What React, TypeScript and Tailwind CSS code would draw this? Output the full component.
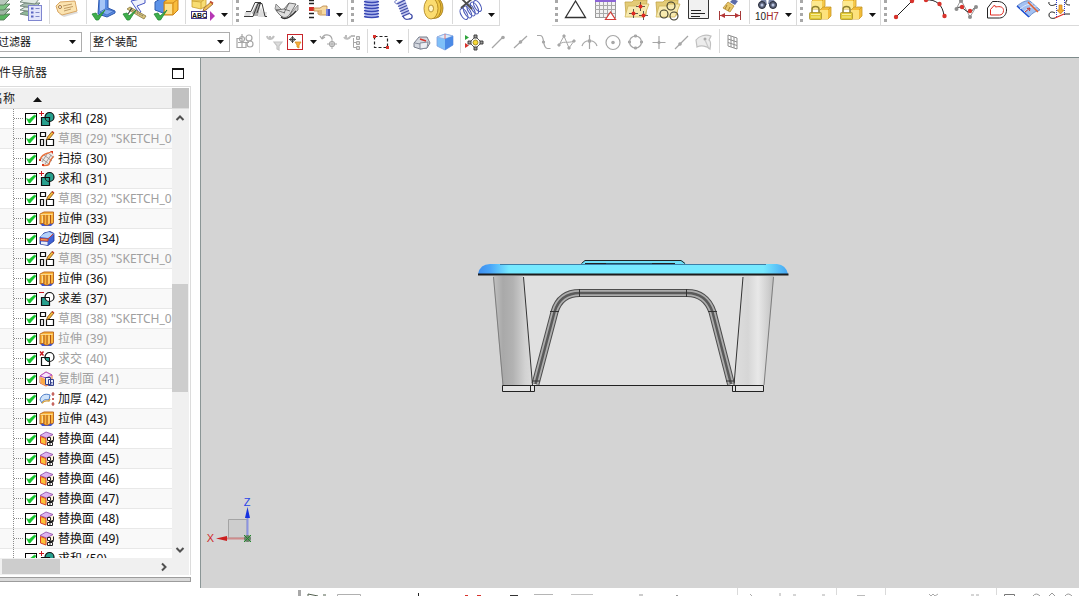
import type { ReactNode } from "react";

/* ---------- shared bits ---------- */

function Grip() {
  return (
    <span className="w-2 h-full flex justify-center shrink-0" aria-hidden>
      <span className="w-0 h-[22px] border-l-3 border-dotted border-[#a8a8a8]" />
    </span>
  );
}

function Sep() {
  return (
    <span className="w-1.5 h-full flex justify-center items-center shrink-0" aria-hidden>
      <span className="w-px h-full max-h-6 mb-0.5 bg-[#dadada]" />
    </span>
  );
}

function Caret() {
  return (
    <svg width="7" height="4" viewBox="0 0 7 4" aria-hidden>
      <path d="M0 0h7L3.500 4z" fill="#111" />
    </svg>
  );
}

function Tool({ label, children }: { label: string; children: ReactNode }) {
  return (
    <button type="button" aria-label={label} className="w-[31px] h-6 shrink-0">
      <svg width="31" height="24" viewBox="0 0 31 24" fill="none" aria-hidden>
        {children}
      </svg>
    </button>
  );
}

function MoreTools() {
  return (
    <button type="button" aria-label="更多" className="w-[11px] h-6 pt-1.5 shrink-0 grid place-items-center">
      <Caret />
    </button>
  );
}

function Group({ children }: { children: ReactNode }) {
  return (
    <div className="h-full flex shrink-0 pr-0.5 border-r border-b border-[#dadada]">{children}</div>
  );
}

function GreenCheck() {
  return <path d="M3 14l4-1 2 3 7-6-6.500 10H7z" fill="#3fae4c" stroke="#238a35" strokeWidth=".8" />;
}

/* ---------- main toolbar ---------- */

function Layers() {
  return (
    <g stroke="#6f8478" strokeWidth=".9">
      <path d="M5 14l5-3h15l-5 6z" fill="#8fb898" />
      <path d="M5 10l5-3h15l-5 5z" fill="#dfe8e1" />
      <path d="M5 6l5-3h15l-5 5z" fill="#a9bdb0" />
      <path d="M5 2l5-4h15l-5 6z" fill="#e2ebe4" />
    </g>
  );
}

function Folder() {
  return (
    <>
      <path d="M3 2h7l2-2h13l-1 15H4z" fill="#e3cb76" stroke="#c3a548" strokeWidth=".8" />
      <path d="M3 17l3-11h8l2-2h11l-5 13z" fill="#f7eab0" stroke="#d1b65a" strokeWidth=".8" />
    </>
  );
}

function LockedCubes() {
  return (
    <>
      <path d="M7 1l3-3h10v8l-3 3H7z" fill="#f6c94a" stroke="#c99a28" strokeWidth=".8" />
      <path d="M7 1h10v8H7z" fill="#fde98e" />
      <path d="M15 10l3-3h8v9l-3 3h-8z" fill="#f2bb38" stroke="#c99a28" strokeWidth=".8" />
      <path d="M15 10h8v9h-8z" fill="#fde27c" />
      <path d="M23 10l3-3M17 1l3-3" stroke="#c99a28" strokeWidth=".8" />
      <path d="M7 13V9.500c0-4 7-4 7 0V13" stroke="#8f8130" strokeWidth="1.500" />
      <rect x="4.500" y="12.500" width="12" height="7" rx="1" fill="#e2ca35" stroke="#a8912a" strokeWidth=".8" />
      <path d="M6 14.500h9M6 17h9" stroke="#f8ef9c" />
    </>
  );
}

function MainToolbar() {
  return (
    <div role="toolbar" aria-label="特征" className="h-[26px] flex shrink-0 overflow-hidden">
      <Group>
        <button type="button" aria-label="图层" className="w-[15px] h-6 shrink-0">
          <svg width="15" height="24" viewBox="16 0 15 24" fill="none" aria-hidden>
            <g stroke="#587a5c" strokeWidth=".9">
              <path d="M5 17l5-3h16l-6 6H5z" fill="#58b35f" />
              <path d="M5 12l5-3h16l-6 6H5z" fill="#9fb6a4" />
              <path d="M5 7l5-3h16l-6 6H5z" fill="#7cc381" />
              <path d="M5 2l5-3h16l-6 6H5z" fill="#b7c8bb" />
            </g>
          </svg>
        </button>
        <Tool label="图层设置">
          <Layers />
          <rect x="13.500" y="5.500" width="13" height="15" fill="#e4e6fb" stroke="#7f86d0" />
          <path d="M16 8.500h2.500M16 12.500h2.500M16 16.500h2.500" stroke="#5a65c2" strokeWidth="2" />
          <path d="M20.500 8.500h4M20.500 12.500h4M20.500 16.500h4" stroke="#8088c8" />
        </Tool>
        <Sep />
        <Tool label="属性">
          <path d="M7 14l17-4 2 3-14 4z" fill="#dcdcdc" />
          <path d="M4 6l4-4 15-1 2 10-15 4-4-3z" fill="#fbe3b0" stroke="#d9a765" />
          <circle cx="8" cy="7" r="1.500" fill="#fff" stroke="#a8783a" />
          <path d="M11 6l9-2M12 8.500l9-2M12 11l7-2" stroke="#b08850" strokeWidth=".8" />
        </Tool>
        <Sep />
        <Tool label="检查几何体">
          <path d="M10-1h9v9l7 3v2l-8 4-9-3z" fill="#5b8de4" stroke="#2c57ad" />
          <path d="M11 0h5v9l-5 3z" fill="#a5c5f7" />
          <path d="M16 9l9 2-7 4-7-3z" fill="#84adf0" stroke="#2c57ad" strokeWidth=".6" />
          <GreenCheck />
        </Tool>
        <Tool label="检查尺寸">
          <path d="M11 1l14-3v5l-8 3 4 6-2 1z" fill="#eef0fa" stroke="#4756c4" />
          <path d="M7 9l3-2 16 9-2 3z" fill="#d8c37a" stroke="#8c7b43" strokeWidth=".8" />
          <path d="M10 9l13 7" stroke="#555" strokeDasharray="1 1" />
          <path d="M12 8L8 14" stroke="#444" strokeWidth="1.200" />
          <GreenCheck />
        </Tool>
        <Tool label="检查装配">
          <path d="M4 2l5-3h8v10l-5 4-8-3z" fill="#5c92e8" stroke="#2f5cae" />
          <path d="M13 2l4-3h10v11l-5 5h-9z" fill="#f9bd3c" stroke="#c77f16" />
          <path d="M13 3h9v12M22 3l5-4" stroke="#d18b1c" />
          <path d="M14 4h7v10h-7z" fill="#fde08a" />
          <GreenCheck />
        </Tool>
        <Sep />
        <Tool label="注释">
          <path d="M4 0h11l3-2v8l-5 3-9-2z" fill="#f8dd72" stroke="#c69d2e" strokeWidth=".8" />
          <path d="M13 2v7M4 1l9 1 4-3" stroke="#c69d2e" strokeWidth=".8" />
          <path d="M23 2l2 2-7 6-3 1 1-3z" fill="#f3c35a" stroke="#8f5a2a" strokeWidth=".8" />
          <path d="M22 1.500l3 2" stroke="#c04d33" strokeWidth="2" />
          <rect x="3.500" y="11.500" width="15" height="7" fill="#fff" stroke="#453a8c" />
          <text x="4" y="18" fontSize="7" fontWeight="700" fontFamily="Liberation Sans, sans-serif" fill="#111">
            ABC
          </text>
          <path d="M22 11v10l5-5z" fill="#b637b4" />
        </Tool>
        <MoreTools />
      </Group>
      <Group>
        <Grip />
        <Tool label="筋板">
          <path d="M4 12h7l-3 5H3zM20 7l2 5h4l-1 5h-8z" fill="#dcdcdc" />
          <path d="M11 13l5-10h4l-3 13h-4z" fill="#a9a9a9" />
          <path d="M3 16.500h9l5-13h4l3 13h2M5 11.500h5l4-9h6M16 13l3-9" stroke="#3a3a3a" />
        </Tool>
        <Tool label="折弯">
          <path d="M4 4l8 8-2 5-7-8zM18 17l8-7v-5l-7 8z" fill="#cfcfcf" stroke="#777" strokeWidth=".8" />
          <path d="M4 10l8-1 5-6 7 1-6 10c-4 6-9 4-14-4z" fill="#dedede" stroke="#555" strokeWidth=".8" />
          <path d="M12 9l6 2M13 13c-4-1-5-2-9-3M17 3l-5 10" stroke="#555" strokeWidth=".8" />
          <path d="M9 17c3 3 8 2 15-6" stroke="#333" strokeWidth="1.200" />
        </Tool>
        <Tool label="选择截面">
          <path d="M6 0.500h5M6 3.500h5M6 13.500h5M6 17.500h5" stroke="#222" strokeWidth="1.500" />
          <path d="M6 7h5v4H6z" fill="#d33128" />
          <path d="M11 8h6l3-2h4v9h-7l-2-1v-3h-4z" fill="#f7d9a0" stroke="#b98443" strokeWidth=".8" />
          <path d="M15 11h4M16 13h3" stroke="#b98443" strokeWidth=".8" />
          <path d="M23 9h4v7h-4z" fill="#7a85dc" />
          <path d="M25 9h2v7h-2z" fill="#4350b8" />
        </Tool>
        <MoreTools />
      </Group>
      <Group>
        <Grip />
        <Tool label="压缩弹簧">
          <path d="M9-1h13v19H9z" fill="#b6bff0" />
          <path d="M8 1.500q8 2 15 0M8 4.500q8 2 15 0M8 7.500q8 2 15 0M8 10.500q8 2 15 0M8 13.500q8 2 15 0M8 16.500q8 2 15 0" stroke="#3a48b4" strokeWidth="1.500" />
        </Tool>
        <Tool label="拉伸弹簧">
          <path d="M10 2l8-3 5 15-7 3z" fill="#c3c8ef" />
          <path d="M10 4l8-4M11 6.500l8-3.500M12 9l8-3.500M13 11.500l8-3.500M14 14l8-3.500M15 16.500l8-3.500" stroke="#414da8" strokeWidth="1.300" />
          <path d="M16 16c1 3 3 4 6 3 4 0 4-4 1-5" stroke="#414da8" strokeWidth="1.300" />
          <path d="M10 4c-3-1-3-3 0-4" stroke="#6570c0" />
        </Tool>
        <Tool label="蝶形弹簧">
          <ellipse cx="18" cy="8" rx="7" ry="10" fill="#e9bb35" stroke="#9c7416" strokeWidth=".8" />
          <ellipse cx="16" cy="8" rx="7" ry="10.500" fill="#f1c948" stroke="#9c7416" strokeWidth=".8" />
          <ellipse cx="13" cy="8.500" rx="7" ry="10.500" fill="#fbdc70" stroke="#a87d18" strokeWidth=".8" />
          <ellipse cx="13" cy="8.500" rx="2.500" ry="3.500" fill="#fff6c8" stroke="#a87d18" strokeWidth=".8" />
        </Tool>
        <Sep />
        <Tool label="删除弹簧">
          <g stroke="#4a59b8" strokeWidth="1.100">
            <ellipse cx="9" cy="14" rx="3" ry="6" transform="rotate(-30 9 14)" />
            <ellipse cx="12.500" cy="12" rx="3" ry="6.500" transform="rotate(-30 12.500 12)" />
            <ellipse cx="16" cy="10" rx="3" ry="6.500" transform="rotate(-30 16 10)" />
            <ellipse cx="19.500" cy="8" rx="3" ry="6.500" transform="rotate(-30 19.500 8)" />
            <ellipse cx="22.500" cy="6" rx="3" ry="6" transform="rotate(-30 22.500 6)" />
          </g>
          <path d="M6-2l11 11M18-2L6 8" stroke="#4b4b4b" strokeWidth="1.800" />
        </Tool>
        <MoreTools />
      </Group>
      <div className="h-full flex grow ml-[52px] min-w-0">
        <Group>
          <Grip />
          <Tool label="基准">
            <path d="M15.500 1L5.500 17.500h20z" stroke="#333" strokeWidth="1.300" />
          </Tool>
          <Tool label="表格">
            <rect x="4.500" y="1.500" width="20" height="16" fill="#f2f2f2" stroke="#9a9a9a" />
            <path d="M4 5.500h20M4 9.500h20M4 13.500h20M8.500 2v15M12.500 2v15M16.500 2v15M20.500 2v15" stroke="#a8a8a8" />
            <path d="M4 0h21v2H4z" fill="#8b64d6" />
            <path d="M19.500 12l-5 7.500h10z" fill="#fff" stroke="#d23c36" strokeWidth="1.200" />
          </Tool>
          <Tool label="点集">
            <Folder />
            <path d="M18.500 2v9M14 6.500h9M11.500 9v9M7 13.500h9M21.500 11v9M17 15.500h9" stroke="#333" strokeWidth=".8" />
            <g fill="#e02c22">
              <circle cx="18.500" cy="6.500" r="2" />
              <circle cx="11.500" cy="13.500" r="2" />
              <circle cx="21.500" cy="15.500" r="2" />
            </g>
          </Tool>
          <Tool label="孔集">
            <Folder />
            <g stroke="#3b3b2a" strokeWidth="1.100">
              <circle cx="18" cy="6" r="4" />
              <circle cx="11" cy="14" r="4" />
              <circle cx="21" cy="16" r="4" />
            </g>
          </Tool>
          <Tool label="技术要求">
            <path d="M4.500-1v19.500h20V-1" fill="#f1f1f1" stroke="#333" />
            <path d="M7 10.500h10M7 13.500h14M7 16.500h9" stroke="#222" />
          </Tool>
          <Tool label="格式刷">
            <path d="M18-1l5 2-3 4-5-3z" fill="#5b6ba8" />
            <path d="M13 2l6 4-4 6-7-4z" fill="#e9c86b" stroke="#b48d37" strokeWidth=".8" />
            <path d="M12 5l-2 4M15 7l-2 4" stroke="#a67f2c" />
            <path d="M4.500 11v9M25.500 11v9M5 15.500h20" stroke="#a63a3a" />
            <path d="M5 15.500l5-2.500v5zM25 15.500l-5-2.500v5z" fill="#b53636" />
          </Tool>
          <Sep />
          <Tool label="公差查询">
            <path d="M6 5l4-6h4l1 6zM16 4l1-5h4l4 5z" fill="#7b86a6" />
            <circle cx="10" cy="5" r="3.500" fill="#5a6178" stroke="#272c3a" />
            <circle cx="21" cy="5" r="3.500" fill="#5a6178" stroke="#272c3a" />
            <circle cx="10" cy="5" r="1.500" fill="#b9c4e0" />
            <circle cx="21" cy="5" r="1.500" fill="#b9c4e0" />
            <text x="3" y="20" fontSize="10" fontFamily="Liberation Sans, sans-serif" fill="#222">
              10<tspan fill="#a32626">H7</tspan>
            </text>
          </Tool>
          <MoreTools />
        </Group>
        <Group>
          <Grip />
          <Tool label="锁定部件">
            <LockedCubes />
          </Tool>
          <Tool label="锁定装配">
            <LockedCubes />
          </Tool>
          <MoreTools />
        </Group>
        <div className="h-full flex grow border-b border-[#dadada]">
          <Grip />
          <Tool label="直线">
            <path d="M7 17L23 1" stroke="#222" />
            <circle cx="7" cy="17" r="2.200" fill="#d8332c" />
            <circle cx="23" cy="1" r="2.200" fill="#d8332c" />
          </Tool>
          <Tool label="圆弧">
            <path d="M6 0c10-1 17 5 18 16" stroke="#222" />
            <circle cx="6" cy="0" r="2.200" fill="#d8332c" />
            <circle cx="19.500" cy="4" r="2.200" fill="#d8332c" />
            <circle cx="24.500" cy="16" r="2.200" fill="#d8332c" />
          </Tool>
          <Tool label="艺术样条">
            <path d="M5 9l5-9 9 17 6-10" stroke="#9a9a9a" />
            <path d="M5 9c6-6 9 4 14 3 3-1 3-4 6-5" stroke="#333" />
            <g fill="#8d8d8d">
              <circle cx="5.500" cy="9" r="2" />
              <circle cx="19" cy="17" r="2" />
              <circle cx="25" cy="7" r="2" />
              <circle cx="10" cy="1" r="2" />
            </g>
            <circle cx="11" cy="7" r="2.200" fill="#d8332c" />
            <circle cx="19" cy="11" r="2.200" fill="#d8332c" />
          </Tool>
          <Tool label="偏置曲线">
            <path d="M5.500 18V8l5-6.500h5c6 0 9 4 9 8.500s-3 8-7 8z" stroke="#222" />
            <path d="M8.500 15V9.500l4-4.500 1 2c5-1 8 0 8 3.500 0 3-2 4.500-4 4.500z" stroke="#e02c22" />
          </Tool>
          <Tool label="面上偏置">
            <path d="M4 6C9 2 13 0 17 1l10 9c-4 1-8 3-11 7z" fill="#a3c1f2" stroke="#5a7fc0" strokeWidth=".8" />
            <path d="M4 6l12 11" stroke="#1e4fd0" strokeWidth="1.500" />
            <path d="M7 9c5-4 8-5 13-5M11 12c4-4 8-6 13-6" stroke="#dbe8fb" />
            <path d="M15 2l10 10" stroke="#e6602a" strokeWidth="1.500" />
            <path d="M12 12l5-4M17 8l-3 .5M17 8l-.5 3" stroke="#c5332b" />
          </Tool>
          <Tool label="截面曲线">
            <path d="M12.500-2v20M20.500-2v17" stroke="#3040d0" strokeDasharray="1 1" />
            <path d="M12 4c-4 3-8 1-7-2M26 5c-5 0-5-2-3-5M11 13c-3-2-6-1-6 2s3 4 6 3M20 14h6" stroke="#222" />
            <path d="M11 18l9-4" stroke="#e02c22" strokeWidth="1.300" />
            <path d="M15 5h3v5h2l-3.500 4-3.500-4h2z" fill="#f6ad32" stroke="#c57a17" strokeWidth=".7" />
          </Tool>
        </div>
      </div>
    </div>
  );
}

/* ---------- selection bar ---------- */

function Snap({ label, children }: { label: string; children: ReactNode }) {
  return (
    <button type="button" aria-label={label} className="w-[23px] h-[22px] shrink-0">
      <svg width="23" height="22" viewBox="0 0 23 22" fill="none" stroke="#a6a6a6" strokeWidth="1.200" aria-hidden>
        {children}
      </svg>
    </button>
  );
}

function MoreSnap({ wide = false }: { wide?: boolean }) {
  return (
    <button type="button" aria-label="更多" className={`${wide ? "w-3" : "w-2.5"} h-[22px] shrink-0 grid place-items-center`}>
      <Caret />
    </button>
  );
}

function DropDown({ label, value, className }: { label: string; value: string; className: string }) {
  return (
    <div className={`relative h-5 shrink-0 ${className}`}>
      <select
        aria-label={label}
        className="block w-full h-full appearance-none border border-[#adadad] bg-white pl-0.5 pr-4 text-[11px] leading-4 text-[#111]"
      >
        <option>{value}</option>
      </select>
      <span className="absolute right-1.5 top-2 pointer-events-none">
        <Caret />
      </span>
    </div>
  );
}

function SelectionBar() {
  return (
    <div role="toolbar" aria-label="选择条" className="h-8 flex items-center shrink-0 overflow-hidden border-b border-[#7d8b8b]">
      <DropDown label="类型过滤器" value="过滤器" className="w-[87px] -ml-[5px]" />
      <DropDown label="选择范围" value="整个装配" className="w-[140px] ml-2 mr-[3px]" />
      <Snap label="相交">
        <path d="M4 7.500h5v9H4zM9 3v10M5 11.500h11M9 16.500h4v-5" />
        <circle cx="9" cy="8" r="2.500" />
        <circle cx="16" cy="7" r="3" />
        <circle cx="17" cy="13" r="3" />
      </Snap>
      <Sep />
      <Snap label="重置过滤器">
        <path d="M5 5c1 4 5 4 7 0M8 5v3" stroke="#c0c0c0" strokeWidth="2" />
        <path d="M12 11h8l-3 4v4l-2-1v-3z" fill="#dcdcdc" stroke="#c4c4c4" />
      </Snap>
      <Snap label="细节过滤器">
        <rect x="2.500" y="3.500" width="15" height="15" stroke="#c8252b" strokeWidth="1" />
        <circle cx="7.500" cy="8.500" r="2" stroke="#444" strokeWidth="1" />
        <path d="M7.500 5v7M4 8.500h7" stroke="#444" strokeWidth="1" />
        <path d="M10 11h6l-2 3v3l-2-1v-2z" fill="#f7b13c" stroke="#d88a1e" strokeWidth=".8" />
      </Snap>
      <MoreSnap />
      <Snap label="移动手柄">
        <path d="M4 8c1-6 9-5 10 0M4 8L2 5M4 8l3-2" />
        <circle cx="14" cy="13" r="2.500" />
        <path d="M14 8v10M9 13h10" strokeWidth="1" />
      </Snap>
      <Snap label="选择组">
        <path d="M3 6c2 3 5 2 7-1M5 4v4M10 5h4" stroke="#bdbdbd" strokeWidth="2" />
        <path d="M12.500 7v9.500M12.500 11.500h3M12.500 16.500h3" strokeWidth="1" />
        <path d="M15.500 5.500h3v3h-3zM15.500 10.500h3v3h-3zM15.500 15.500h3v3h-3z" fill="#ddd" strokeWidth="1" />
      </Snap>
      <Sep />
      <Snap label="矩形选择">
        <path d="M4.500 5.500h13v11h-13z" stroke="#222" strokeDasharray="3 2" />
        <path d="M3 4h3v3H3zM16 15h3v3h-3z" fill="#d8332c" stroke="none" />
      </Snap>
      <MoreSnap wide />
      <Sep />
      <Snap label="着色显示">
        <path d="M3 12l5-6 8 0 3 6-3 5-7 1-6-2z" fill="#d3d7df" stroke="#6a7080" strokeWidth=".9" />
        <path d="M9 12l8-1-1 6-7 1zM4 12l5 1" fill="#eceef3" stroke="#7d8494" strokeWidth=".9" />
        <path d="M9 8l6 2" stroke="#d8332c" strokeWidth="1.500" />
      </Snap>
      <Snap label="透明显示">
        <path d="M3 6l8-3 8 2v9l-8 5-8-4z" fill="#7fc0f8" stroke="#7fa0e0" strokeWidth=".8" />
        <path d="M3 6l8 2 8-3-8-2z" fill="#dcebfc" stroke="#8fb0e4" strokeWidth=".8" />
        <path d="M11 8v11l8-5V5z" fill="#4b8ae6" stroke="none" />
        <path d="M11 3v5" stroke="#e05555" strokeWidth=".8" />
      </Snap>
      <Sep />
      <Snap label="启用捕捉点">
        <path d="M2 4v5l4-2.500z" fill="#2fa43c" stroke="none" />
        <path d="M2 12v5l4-2.500z" fill="#d8332c" stroke="none" />
        <path d="M12.500 5.500l6 6-6 6-6-6z" stroke="#444" strokeWidth=".9" />
        <path d="M11 4h3v3h-3zM11 16h3v3h-3zM5 10h3v3H5zM17 10h3v3h-3z" fill="#999" stroke="#333" strokeWidth=".9" />
        <circle cx="12.500" cy="11.500" r="2.500" fill="#f8d833" stroke="#8c7a18" strokeWidth=".8" />
      </Snap>
      <Snap label="端点">
        <path d="M6 17L17 6" />
        <circle cx="17" cy="6.500" r="1.200" fill="#aaa" />
      </Snap>
      <Snap label="中点">
        <path d="M5 17L18 5" />
        <circle cx="11.500" cy="11" r="1.200" fill="#aaa" />
      </Snap>
      <Snap label="控制点">
        <path d="M5 4.500h3c3 0 3 3 3.500 6s1 7 4 7h3" />
        <circle cx="11.500" cy="11" r="1" fill="#aaa" />
      </Snap>
      <Snap label="极点">
        <path d="M4 14L9 5l5 12 5-7" strokeWidth="1" />
        <path d="M4 14c4-5 8-1 15-4" strokeWidth="1" />
        <path d="M3 13h2v2H3zM8 4h2v2H8zM13 16h2v2h-2zM18 9h2v2h-2z" fill="#aaa" strokeWidth="1" />
      </Snap>
      <Snap label="交点">
        <path d="M4 15c2-7 13-7 15 0M11.500 4v14" />
        <path d="M10.500 9h2v2h-2z" fill="#aaa" />
      </Snap>
      <Snap label="圆弧中心">
        <circle cx="12" cy="11.500" r="7" />
        <circle cx="12" cy="11.500" r="1.200" fill="#aaa" />
      </Snap>
      <Snap label="象限点">
        <circle cx="11.500" cy="11" r="6" />
        <path d="M10.500 4h2v2h-2zM10.500 16h2v2h-2zM4.500 10h2v2h-2zM16.500 10h2v2h-2z" fill="#aaa" strokeWidth="1" />
      </Snap>
      <Snap label="现有点">
        <path d="M12 5v13M5.500 11.500h13" />
        <circle cx="12" cy="11.500" r="1" fill="#aaa" />
      </Snap>
      <Snap label="曲线上的点">
        <path d="M5 18L18 5" />
        <circle cx="10" cy="13" r="1.200" fill="#aaa" />
      </Snap>
      <Snap label="面上的点">
        <path d="M3 9c3-4 9-6 15-4l-2 4c2 1 2 4 1 9-3-3-9-4-13-2z" fill="#ececec" stroke="#c0c0c0" />
        <circle cx="12" cy="8" r="1.500" fill="#aaa" stroke="none" />
        <path d="M12 9l4 9" stroke="#c9c9c9" />
      </Snap>
      <Sep />
      <Snap label="有界栅格">
        <path d="M6 4l9 3v11l-9-3zM9 5v11M12 6v11M6 8l9 3M6 11.500l9 3" stroke="#909090" strokeWidth="1" />
      </Snap>
    </div>
  );
}

/* ---------- part navigator ---------- */

type Kind = "unite" | "subtract" | "intersect" | "sketch" | "sweep" | "extrude" | "blend" | "copyFace" | "thicken" | "replaceFace";

type Feature = { kind: Kind; name: string; id: number; note?: string; dim?: boolean };

const SKETCH_NOTE = '"SKETCH_0';

const FEATURES: Feature[] = [
  { kind: "unite", name: "求和", id: 28 },
  { kind: "sketch", name: "草图", id: 29, note: SKETCH_NOTE, dim: true },
  { kind: "sweep", name: "扫掠", id: 30 },
  { kind: "unite", name: "求和", id: 31 },
  { kind: "sketch", name: "草图", id: 32, note: SKETCH_NOTE, dim: true },
  { kind: "extrude", name: "拉伸", id: 33 },
  { kind: "blend", name: "边倒圆", id: 34 },
  { kind: "sketch", name: "草图", id: 35, note: SKETCH_NOTE, dim: true },
  { kind: "extrude", name: "拉伸", id: 36 },
  { kind: "subtract", name: "求差", id: 37 },
  { kind: "sketch", name: "草图", id: 38, note: SKETCH_NOTE, dim: true },
  { kind: "extrude", name: "拉伸", id: 39, dim: true },
  { kind: "intersect", name: "求交", id: 40, dim: true },
  { kind: "copyFace", name: "复制面", id: 41, dim: true },
  { kind: "thicken", name: "加厚", id: 42 },
  { kind: "extrude", name: "拉伸", id: 43 },
  { kind: "replaceFace", name: "替换面", id: 44 },
  { kind: "replaceFace", name: "替换面", id: 45 },
  { kind: "replaceFace", name: "替换面", id: 46 },
  { kind: "replaceFace", name: "替换面", id: 47 },
  { kind: "replaceFace", name: "替换面", id: 48 },
  { kind: "replaceFace", name: "替换面", id: 49 },
  { kind: "unite", name: "求和", id: 50 },
];

const GLYPHS: Record<Kind, ReactNode> = {
  unite: (
    <>
      <path d="M0 2.500h5M2.500 0v5" stroke="#c8181e" />
      <circle cx="10.500" cy="6" r="4.500" fill="#27a08e" stroke="#111" strokeWidth="1.200" />
      <path d="M2.500 6.500h8v8h-8z" fill="#27a08e" stroke="#111" strokeWidth="1.200" />
      <path d="M10.500 10.500A4.500 4.500 0 0 1 6 6.500" stroke="#111" />
    </>
  ),
  subtract: (
    <>
      <path d="M0 1.500h5" stroke="#c8181e" />
      <path d="M2.500 6.500h8v8h-8z" fill="#27a08e" stroke="#111" strokeWidth="1.200" />
      <circle cx="10.500" cy="6" r="4.500" fill="#fff" stroke="#111" strokeWidth="1.200" />
      <path d="M6 6.500h4.500V11" stroke="#111" />
    </>
  ),
  intersect: (
    <>
      <path d="M1 .5l3.500 4M4.500 .5L1 4.500" stroke="#c8181e" strokeWidth="1.400" />
      <path d="M2.500 6.500h8v8h-8z" fill="#fff" stroke="#111" strokeWidth="1.200" />
      <circle cx="10.500" cy="6" r="4.500" fill="#fff" stroke="#111" strokeWidth="1.200" />
      <path d="M6 6.500h4.500v4C8 10.500 6 9 6 6.500z" fill="#27a08e" stroke="#111" />
    </>
  ),
  sketch: (
    <>
      <path d="M1.500 1.500h5v4h-5zM1.500 8.500h3v6h-3zM7.500 8.500h7v6h-7z" fill="#fff" stroke="#111" strokeWidth="1.200" />
      <path d="M7.500 9l1-3L13 .5l2 1.500-4.500 5.500z" fill="#f4b83c" stroke="#7a4b13" strokeWidth=".8" />
      <path d="M13 .5l2 1.500" stroke="#c0392b" strokeWidth="1.300" />
    </>
  ),
  sweep: (
    <>
      <path d="M1 8L7 3l7-1.500 1 4-5 8.500-6 0z" fill="#eeeae7" />
      <path d="M3 11l5-8M6 13l6-9M9 14l5-8M2 7l8 6M5 4l8 6M9 2l5 4" stroke="#9a9391" strokeWidth=".9" />
      <path d="M1 9c1-4 4-6 8-7l3-1M4 14.500c3 0 5 0 6-1 1-4 3-7 5-8" stroke="#e9703a" strokeWidth="1.300" />
      <path d="M11 0h3v3M0 8h2v2H0zM3 13h2v2H3z" fill="#d8391c" />
    </>
  ),
  extrude: (
    <>
      <path d="M1 12l2 3h9l3-3-2-2z" fill="#3f57cc" />
      <path d="M1 3l4-2h9.500v10.500L13 13l-2-1-1.500 2H6l-1.500-2L1 13z" fill="#fbb53a" stroke="#b5601a" strokeWidth=".9" />
      <path d="M5 3v9M8 3v10M11.500 3v9" stroke="#a8541a" />
      <path d="M1.500 3.500h12M3.500 5v7M10 5v8" stroke="#fde09a" strokeWidth=".9" />
    </>
  ),
  blend: (
    <>
      <path d="M1 6l4-4 6-1.500 4 2V10l-6 4.500-8-1.500z" fill="#3f62d6" stroke="#1e3592" strokeWidth=".8" />
      <path d="M1 6c2-3 5-4 9-5l5 2-6 4z" fill="#b5d2f9" />
      <path d="M1.500 7.500L9 8v2l-7.500-.5z" fill="#f8a55b" stroke="#d0381e" strokeWidth=".8" />
      <path d="M2 10.500l6.500.5V14L2 13z" fill="#e9edf8" />
      <path d="M9 8l5-5" stroke="#d8402a" />
    </>
  ),
  copyFace: (
    <>
      <path d="M1 5l6-4 6 3v8l-6 3-6-3z" fill="#fbe6cc" stroke="#e0642a" strokeWidth=".9" />
      <path d="M1 5l6-4 6 3-6 3z" fill="#f8e6fb" stroke="#b34cc8" />
      <path d="M2 6l4 2v6l-4-2z" fill="#fba944" />
      <path d="M6.500 6.500h5v7h-5zM9.500 8.500h5v6h-5z" fill="#eef1fb" stroke="#323f8c" />
      <path d="M11 11.500h2.500M11 13h2.500" stroke="#323f8c" strokeWidth=".8" />
    </>
  ),
  thicken: (
    <>
      <path d="M1 9c1-5 5-7 10-5l-1 5c-4-1-6 0-7 3z" fill="#cfe3fa" stroke="#3d6fc0" strokeWidth=".9" />
      <path d="M3 12.500c1-2 4-3 7-2.500l1-2" stroke="#d6a03e" strokeWidth="1.300" />
      <path d="M14 1v4M14 7v2M14 11v4M12.500 3h3M12.500 13h3M13 8h2" stroke="#b3322b" />
    </>
  ),
  replaceFace: (
    <>
      <path d="M1 4.500l6-3.500 7 2.500v8L7 15l-6-3z" fill="#fff3d8" />
      <path d="M1 4.500l6-3.500 7 2.500L7.500 7z" fill="#dcb4f0" stroke="#8c46a8" strokeWidth=".8" />
      <path d="M1.500 5.500L7 7.500V14l-5.500-2z" fill="#fcc236" stroke="#d8402a" />
      <path d="M8.500 6.500h3v3h-3zM8.500 11.500h5v3h-5z" fill="#fff" stroke="#222" />
      <path d="M14.500 5.500v4h-2M10 10.500h4.500M10 13h2" stroke="#222" />
    </>
  ),
};

function FeatureRow({ feature }: { feature: Feature }) {
  const { kind, name, id, note, dim } = feature;
  return (
    <li className="h-5 flex items-center border-b border-[#e8e8e8] odd:bg-white even:bg-[#f9f9f9]">
      <span className="w-[13px] shrink-0" />
      <span className="w-3 h-full shrink-0 flex items-center border-l border-dotted border-[#8c8c8c]" aria-hidden>
        <span className="w-[9px] border-t border-dotted border-[#8c8c8c]" />
      </span>
      <label className="flex items-center whitespace-nowrap">
        <span className="relative w-3 h-3 shrink-0">
          <input
            type="checkbox"
            defaultChecked
            className="peer block w-3 h-3 appearance-none border border-black bg-white"
          />
          <svg
            className="absolute inset-0 hidden peer-checked:block pointer-events-none"
            width="12"
            height="12"
            viewBox="0 0 12 12"
            aria-hidden
          >
            <path d="M1.500 5.500L4 6.500 9.500 2 11 3 5 10H4z" fill="#12c62c" stroke="#12c62c" strokeWidth=".6" />
          </svg>
        </span>
        <svg className="ml-0.5 mr-[3px] shrink-0" width="16" height="16" viewBox="0 0 16 16" fill="none" aria-hidden>
          {GLYPHS[kind]}
        </svg>
        <span className={`flex gap-1 text-xs leading-4 ${dim ? "text-[#a0a0a0]" : "text-[#111]"}`}>
          <span>{name}</span>
          <span>({id})</span>
          {note && <span>{note}</span>}
        </span>
      </label>
    </li>
  );
}

function Chevron({ d }: { d: string }) {
  return (
    <svg width="10" height="10" viewBox="0 0 10 10" fill="none" stroke="#505050" strokeWidth="2" aria-hidden>
      <path d={d} />
    </svg>
  );
}

function PartNavigator() {
  return (
    <aside className="w-[200px] shrink-0 flex flex-col pb-1.5">
      <div className="w-[191px] grow min-h-0 flex flex-col">
        <div className="h-7 flex items-center justify-between shrink-0 pt-0.5 pr-[7px]">
          <h2 className="text-xs text-[#222] -ml-px">件导航器</h2>
          <button type="button" aria-label="最大化" className="w-3 h-[11px] border border-t-2 border-[#111]" />
        </div>
        <div className="grow min-h-0 flex flex-col border-t border-r border-[#dcdcdc] pt-px pr-px">
          <div className="h-[21px] flex shrink-0 border-b border-[#dcdcdc] bg-[#f0f0f0]">
            <button type="button" className="grow flex items-center gap-[18px] -ml-[9px] pt-0.5 text-xs text-[#222]">
              名称
              <svg width="9" height="5" viewBox="0 0 9 5" aria-hidden>
                <path d="M0 5h9L4.500 0z" fill="#111" />
              </svg>
            </button>
            <span className="w-[17px] bg-[#c1c1c1]" />
          </div>
          <div className="grow min-h-0 flex">
            <ul className="grow min-w-0 overflow-hidden">
              {FEATURES.map((f) => (
                <FeatureRow key={f.id} feature={f} />
              ))}
            </ul>
            <div className="w-[17px] shrink-0 flex flex-col items-center bg-[#f0f0f0] pr-px">
              <button type="button" aria-label="向上滚动" className="h-[18px] grid place-items-center">
                <Chevron d="M1.500 7L5 3.500 8.500 7" />
              </button>
              <div className="grow-[157] basis-0" />
              <div className="grow-[109] basis-0 w-full bg-[#cdcdcd]" />
              <div className="grow-[148] basis-0" />
              <button type="button" aria-label="向下滚动" className="h-[18px] grid place-items-center">
                <Chevron d="M1.500 4L5 7.500 8.500 4" />
              </button>
            </div>
          </div>
          <div className="h-[17px] flex items-center shrink-0 bg-[#f0f0f0] pl-0.5 pr-5">
            <div className="w-[58px] h-[15px] bg-[#cdcdcd]" />
            <button type="button" aria-label="向右滚动" className="ml-auto">
              <Chevron d="M3 1.500L6.500 5 3 8.500" />
            </button>
          </div>
        </div>
        <div className="h-[7px] shrink-0 pt-0.5">
          <div className="h-[5px] border-y border-r border-[#9c9c9c] bg-[#dadada]" />
        </div>
      </div>
    </aside>
  );
}

/* ---------- graphics window ---------- */

const RAIL = "M535.500 384L554.500 312Q560 293 580 293H687Q706 293 712.500 312L731 384";

function Model() {
  return (
    <svg className="w-full h-full" viewBox="201 58 878 530" fill="none" aria-label="模型">
      <defs>
        <linearGradient id="legL">
          <stop offset="0" stopColor="#c2c2c2" />
          <stop offset=".25" stopColor="#a9a9a9" />
          <stop offset=".5" stopColor="#b2b2b2" />
          <stop offset=".8" stopColor="#d2d2d2" />
          <stop offset="1" stopColor="#dcdcdc" />
        </linearGradient>
        <linearGradient id="legR">
          <stop offset="0" stopColor="#dedede" />
          <stop offset=".35" stopColor="#d6d6d6" />
          <stop offset=".6" stopColor="#e8e8e8" />
          <stop offset=".85" stopColor="#cfcfcf" />
          <stop offset="1" stopColor="#bcbcbc" />
        </linearGradient>
        <linearGradient id="lid">
          <stop offset="0" stopColor="#3d8ef0" />
          <stop offset=".04" stopColor="#4aa6f8" />
          <stop offset=".1" stopColor="#76e9ff" />
          <stop offset=".92" stopColor="#76e9ff" />
          <stop offset="1" stopColor="#45a5f2" />
        </linearGradient>
      </defs>
      <path d="M493 276H774L764 386H503z" fill="#e0e0e0" />
      <path d="M493 276H523L533 391H503z" fill="url(#legL)" />
      <path d="M743 276H774L764 391H734z" fill="url(#legR)" />
      <path d="M503 386H534V391H503zM733 386H764V391H733z" fill="#e2e2e2" />
      <path d={RAIL} stroke="#4d4d4d" strokeWidth="8" />
      <path d={RAIL} stroke="#adadad" strokeWidth="6" />
      <path d={RAIL} stroke="#5a5a5a" strokeWidth="2.500" />
      <path d="M579.500 289V297M686.500 289V297M550 311.500H559M708 311.500H717M532 381H540M726 381H735" stroke="#333" />
      <path d="M523.500 277L532.500 385M743 277L734 385" stroke="#333" />
      <path d="M493.500 277L503 385M773.500 277L764 385" stroke="#7d7d7d" />
      <path d="M502.500 385.500H763.500V391.500H732.500V385.500M502.500 385.500V391.500H534.500V385.500M530.500 385.500V391.500M735.500 385.500V391.500" stroke="#222" />
      <path d="M581 264L585 260H682L686 264z" fill="#6fe0f8" />
      <path d="M581.500 263.500L585 260.500H681L685 263.500M585 263.500H606M652 263.500H675" stroke="#222" />
      <path d="M606 263.500H652" stroke="#1d4f60" />
      <path d="M478 274Q480 264 490 264H777Q786 265 788 274z" fill="url(#lid)" />
      <path d="M500 264.500H766" stroke="#3d7fa8" />
      <path d="M478 274.500H788.500" stroke="#1c1c1c" strokeWidth="2" />
    </svg>
  );
}

function Triad() {
  return (
    <svg className="absolute left-1 bottom-[38px]" width="52" height="55" viewBox="205 495 52 55" fill="none" aria-label="坐标系">
      <path d="M228.500 519.500H247V538H228.500z" fill="#cdcdcd" stroke="#a4a4a4" />
      <path d="M247.500 516V536" stroke="#8c94e0" strokeWidth="2" />
      <path d="M247.500 507L250 518H245z" fill="#1632e0" />
      <path d="M226 538.500H245" stroke="#cf8b8b" strokeWidth="2" />
      <path d="M216 538.500L227 536V541z" fill="#cc1f1f" />
      <circle cx="247.500" cy="538.500" r="3.500" fill="#6b806b" />
      <path d="M244 535L251 542M251 535L244 542" stroke="#1d8c2a" />
      <text x="247" y="506" textAnchor="middle" fontSize="11" fontFamily="Liberation Sans, sans-serif" fill="#2a44e8">
        Z
      </text>
      <text x="210.500" y="542" textAnchor="middle" fontSize="11" fontFamily="Liberation Sans, sans-serif" fill="#d02a2a">
        X
      </text>
    </svg>
  );
}

/* ---------- bottom toolbar, cut by the window edge ---------- */

function Cut({ label, d, color, className }: { label: string; d: string; color: string; className: string }) {
  return (
    <button type="button" aria-label={label} className={`h-2 shrink-0 ${className}`}>
      <svg className="w-full h-full" fill="none" stroke={color} aria-hidden>
        <path d={d} />
      </svg>
    </button>
  );
}

function BottomToolbar() {
  return (
    <div role="toolbar" aria-label="曲线" className="h-2 shrink-0 flex overflow-hidden pl-[295px]">
      <span className="w-2 h-2 flex justify-center items-end shrink-0">
        <span className="h-1.5 border-l-3 border-dotted border-[#a8a8a8]" />
      </span>
      <Cut label="草图" className="w-8" color="#53604f" d="M5 8V6l10 2M20 7h3" />
      <Cut label="样式" className="w-8" color="#b0b0b0" d="M2.500 8V6.500h23V8" />
      <Cut label="轮廓" className="w-24" color="#222" d="M51.500 5v3" />
      <Cut label="端点" className="w-8" color="#d8332c" d="M-5 7.500h4M2 7.500h3M14 7.500h4" />
      <Cut label="圆" className="w-8" color="#333" d="M15 7.500h8" />
      <Cut label="阵列" className="w-10" color="#b5b5b5" d="M7 6.500h19" />
      <Cut label="镜像" className="w-10" color="#c4c4c4" d="M4 6.500h22" />
      <Cut label="点" className="w-[127px]" color="#999" d="M32 7h4M69 7.500h2" />
      <Sep />
      <Cut label="修剪" className="w-[93px]" color="#aaa" d="M10 6l2 2M40 5v3M53 7h3M82 7h3" />
      <Sep />
      <Cut label="约束" className="w-[43px]" color="#bbb" d="M18 7.500h8" />
      <Sep />
      <Cut label="尺寸" className="w-[105px]" color="#aaa" d="M41 6l2 2 2-2 2 2 3-2M83 7h3M88 7h3" />
      <Sep />
      <Cut label="矩形" className="w-6" color="#777" d="M5.500 8V6.500h10V8" />
      <Cut label="旋转" className="w-[56px]" color="#999" d="M10 8q3-4 7 0M26 8l3-3 3 3M42 8q3-4 7 0" />
    </div>
  );
}

export default function App() {
  return (
    <div className="h-screen flex flex-col overflow-hidden bg-white font-['Noto_Sans','Noto_Sans_CJK_SC',sans-serif]">
      <MainToolbar />
      <SelectionBar />
      <div className="grow min-h-0 flex">
        <PartNavigator />
        <main className="relative grow min-w-0 border-l border-[#8b9696] bg-[#d4d4d4]">
          <Model />
          <Triad />
        </main>
      </div>
      <BottomToolbar />
    </div>
  );
}
